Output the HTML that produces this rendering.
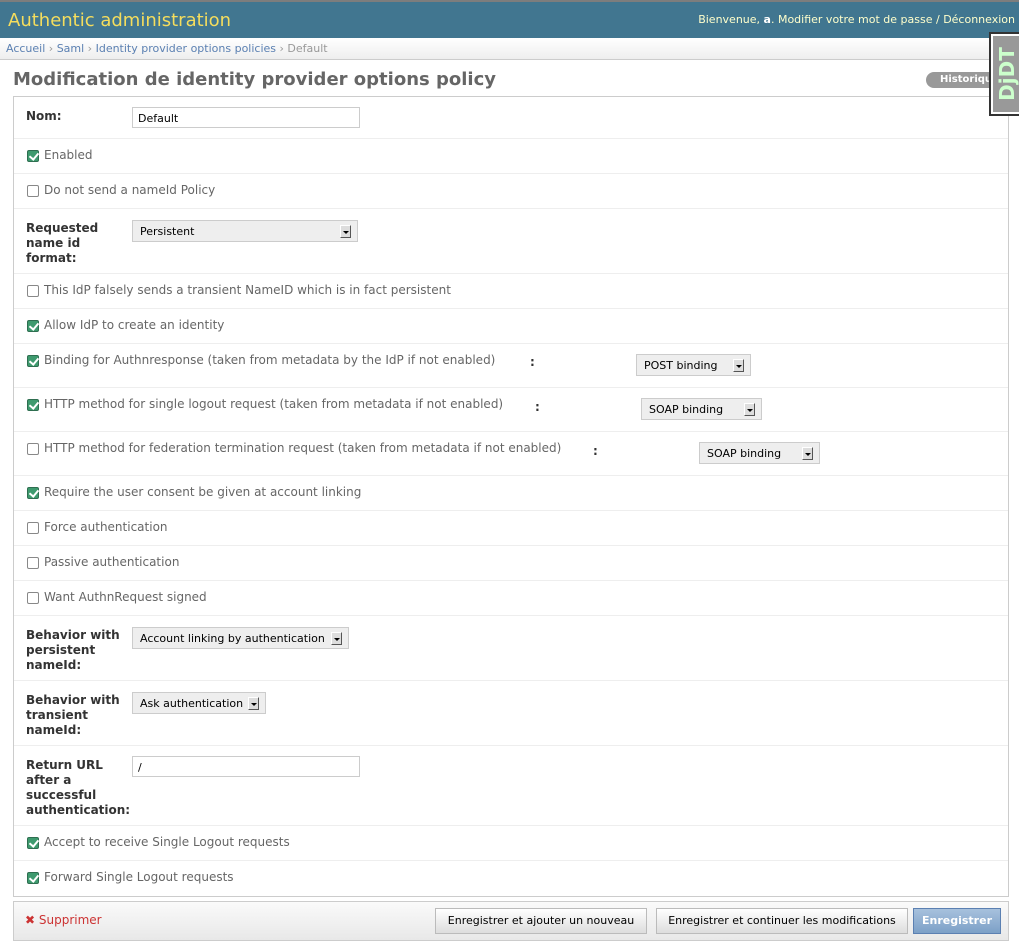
<!DOCTYPE html>
<html><head><meta charset="utf-8"><style>
*{margin:0;padding:0;box-sizing:border-box}
body{width:1019px;height:946px;overflow:hidden;background:#fff;font-family:"DejaVu Sans","Liberation Sans",sans-serif;font-size:12px;color:#333;position:relative}
.a{position:absolute;white-space:nowrap}
#hdr{left:0;top:0;width:1019px;height:38px;background:#417690;border-top:2px solid #7d7d7d}
#bc{left:0;top:38px;width:1019px;height:22px;background:linear-gradient(#fff,#eee);border-bottom:1px solid #ccc;font-size:11px;color:#999;padding:4px 6px}
#bc span{color:#5b80b2}
#fs{left:13px;top:96px;width:996px;height:801px;border:1px solid #ccc;border-top:1px solid #ccc}
.hr{position:absolute;left:14px;width:994px;height:1px;background:#eee}
.lb{position:absolute;left:26px;font-weight:bold;color:#333;font-size:12px;line-height:15px;margin-top:1px}
.cbt{position:absolute;left:44px;color:#666;font-size:12px;margin-top:1px}
.cb{position:absolute;left:27px;width:12px;height:12px;border:1px solid #888;border-radius:2px;background:#fff;margin-top:1px}
.cb.on{background:#3e9a6e;border-color:#2e6e50}
.cb.on:after{content:"";position:absolute;left:3px;top:0px;width:4px;height:7px;border:solid #fff;border-width:0 2px 2px 0;transform:rotate(40deg)}
.in{position:absolute;height:21px;border:1px solid #ccc;background:#fff;font-size:11px;padding:4px 5px 3px;color:#000}
.sel{position:absolute;height:22px;border:1px solid #ccc;background:#eee;font-size:11px;padding:4px 7px;color:#000}
.sel i{position:absolute;right:6px;top:4px;width:11px;height:13px;background:#ddd;border:1px solid;border-color:#fff #555 #555 #fff}
.sel i:after{content:"";position:absolute;left:2px;top:5px;border:3px solid transparent;border-top:3px solid #000}
.colon{position:absolute;font-weight:bold;color:#333}
.btn{position:absolute;top:908px;height:26px;border:1px solid #bbb;background:linear-gradient(#fff,#ddd);font-size:11px;color:#000;text-align:center;line-height:24px}
</style></head><body>
<div class="a" id="hdr"></div>
<div class="a" style="left:8px;top:10px;font-size:18px;color:#f5dd5d">Authentic administration</div>
<div class="a" style="right:4px;top:13px;font-size:11px;color:#ffc">Bienvenue, <b style="color:#fff">a</b>. Modifier votre mot de passe / Déconnexion</div>
<div class="a" id="bc"><span>Accueil</span> › <span>Saml</span> › <span>Identity provider options policies</span> › Default</div>
<div class="a" style="left:13px;top:69px;font-size:18px;font-weight:bold;color:#666">Modification de identity provider options policy</div>
<div class="a" style="left:926px;top:72px;width:100px;height:16px;border-radius:8px;background:#999;color:#fff;font-size:10px;font-weight:bold;padding:1px 14px;line-height:14px">Historique</div>
<div class="a" id="fs"></div>

<div class="lb" style="top:108px">Nom:</div>
<div class="in" style="left:132px;top:107px;width:228px">Default</div>
<div class="hr" style="top:138px"></div>
<div class="cb on" style="top:149px"></div><div class="cbt" style="top:147px">Enabled</div>
<div class="hr" style="top:173px"></div>
<div class="cb" style="top:184px"></div><div class="cbt" style="top:182px">Do not send a nameId Policy</div>
<div class="hr" style="top:208px"></div>
<div class="lb" style="top:220px">Requested<br>name id<br>format:</div>
<div class="sel" style="left:132px;top:220px;width:226px">Persistent<i></i></div>
<div class="hr" style="top:273px"></div>
<div class="cb" style="top:284px"></div><div class="cbt" style="top:282px">This IdP falsely sends a transient NameID which is in fact persistent</div>
<div class="hr" style="top:308px"></div>
<div class="cb on" style="top:319px"></div><div class="cbt" style="top:317px">Allow IdP to create an identity</div>
<div class="hr" style="top:343px"></div>
<div class="cb on" style="top:354px"></div><div class="cbt" style="top:352px">Binding for Authnresponse (taken from metadata by the IdP if not enabled)</div>
<div class="colon" style="left:530px;top:355px">:</div>
<div class="sel" style="left:636px;top:354px;width:115px">POST binding<i></i></div>
<div class="hr" style="top:387px"></div>
<div class="cb on" style="top:398px"></div><div class="cbt" style="top:396px">HTTP method for single logout request (taken from metadata if not enabled)</div>
<div class="colon" style="left:535px;top:400px">:</div>
<div class="sel" style="left:641px;top:398px;width:121px">SOAP binding<i></i></div>
<div class="hr" style="top:431px"></div>
<div class="cb" style="top:442px"></div><div class="cbt" style="top:440px">HTTP method for federation termination request (taken from metadata if not enabled)</div>
<div class="colon" style="left:593px;top:444px">:</div>
<div class="sel" style="left:699px;top:442px;width:121px">SOAP binding<i></i></div>
<div class="hr" style="top:475px"></div>
<div class="cb on" style="top:486px"></div><div class="cbt" style="top:484px">Require the user consent be given at account linking</div>
<div class="hr" style="top:510px"></div>
<div class="cb" style="top:521px"></div><div class="cbt" style="top:519px">Force authentication</div>
<div class="hr" style="top:545px"></div>
<div class="cb" style="top:556px"></div><div class="cbt" style="top:554px">Passive authentication</div>
<div class="hr" style="top:580px"></div>
<div class="cb" style="top:591px"></div><div class="cbt" style="top:589px">Want AuthnRequest signed</div>
<div class="hr" style="top:615px"></div>
<div class="lb" style="top:627px">Behavior with<br>persistent<br>nameId:</div>
<div class="sel" style="left:132px;top:627px;width:217px">Account linking by authentication<i></i></div>
<div class="hr" style="top:680px"></div>
<div class="lb" style="top:692px">Behavior with<br>transient<br>nameId:</div>
<div class="sel" style="left:132px;top:692px;width:134px">Ask authentication<i></i></div>
<div class="hr" style="top:745px"></div>
<div class="lb" style="top:757px">Return URL<br>after a<br>successful<br>authentication:</div>
<div class="in" style="left:132px;top:756px;width:228px">/</div>
<div class="hr" style="top:825px"></div>
<div class="cb on" style="top:836px"></div><div class="cbt" style="top:834px">Accept to receive Single Logout requests</div>
<div class="hr" style="top:860px"></div>
<div class="cb on" style="top:871px"></div><div class="cbt" style="top:869px">Forward Single Logout requests</div>

<div class="a" style="left:13px;top:901px;width:996px;height:40px;border:1px solid #ccc;background:linear-gradient(#fafafa,#e8e8e8)"></div>
<div class="a" style="left:25px;top:913px;font-size:12px;color:#c33"><span style="font-weight:bold">✖</span> Supprimer</div>
<div class="btn" style="left:435px;width:212px">Enregistrer et ajouter un nouveau</div>
<div class="btn" style="left:656px;width:252px">Enregistrer et continuer les modifications</div>
<div class="btn" style="left:913px;width:88px;background:linear-gradient(#a7c1dd,#7ca0c7);border-color:#5b80b2;color:#fff;font-weight:bold">Enregistrer</div>

<div class="a" style="left:989px;top:32px;width:32px;height:84px;border:2px solid #333;border-right:none;background:#fff;padding:2px 0 2px 2px">
<div style="width:100%;height:100%;background:#999;position:relative">
<div class="a" style="left:50%;top:50%;transform:translate(-50%,-50%) rotate(-90deg);color:#cfc;font-weight:bold;font-size:20px;font-family:'DejaVu Sans',sans-serif">DjDT</div>
</div></div>
</body></html>
